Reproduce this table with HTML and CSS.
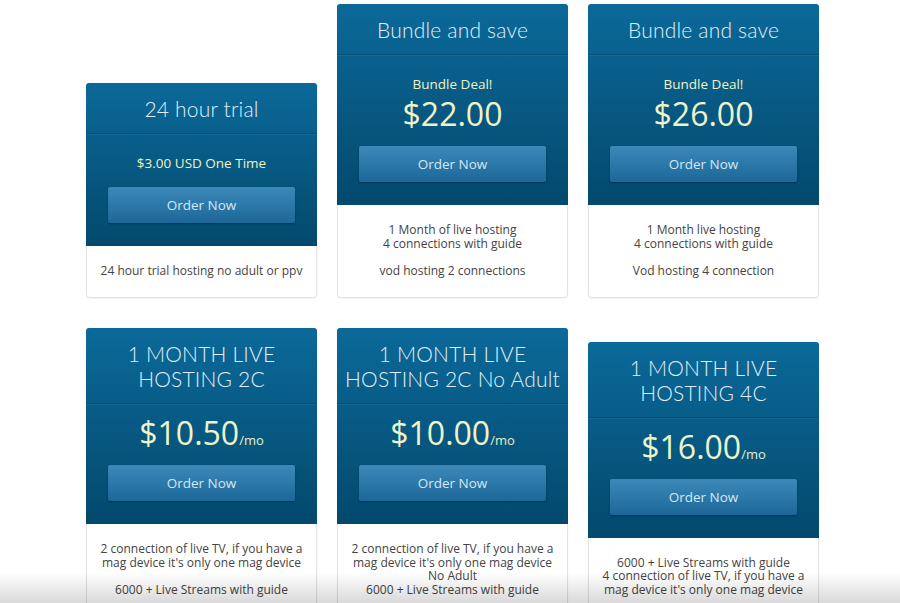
FILE: index.html
```
<!DOCTYPE html>
<html lang="en">
<head>
<meta charset="utf-8">
<title>Hosting plans</title>
<link rel="stylesheet" href="styles.css">
</head>
<body>
<main class="plans">
  <section class="row">
    <article class="card">
      <header class="head">
        <h2 class="title">24 hour trial</h2>
        <div class="pricing">
          <div class="note">$3.00 USD One Time</div>
          <a class="btn" href="#">Order Now</a>
        </div>
      </header>
      <div class="features">
        <p>24 hour trial hosting no adult or ppv</p>
      </div>
    </article>
    <article class="card">
      <header class="head">
        <h2 class="title">Bundle and save</h2>
        <div class="pricing">
          <div class="note">Bundle Deal!</div>
          <div class="price">$22.00</div>
          <a class="btn" href="#">Order Now</a>
        </div>
      </header>
      <div class="features">
        <p>1 Month of live hosting<br>4 connections with guide</p>
        <p>vod hosting 2 connections</p>
      </div>
    </article>
    <article class="card">
      <header class="head">
        <h2 class="title">Bundle and save</h2>
        <div class="pricing">
          <div class="note">Bundle Deal!</div>
          <div class="price">$26.00</div>
          <a class="btn" href="#">Order Now</a>
        </div>
      </header>
      <div class="features">
        <p>1 Month live hosting<br>4 connections with guide</p>
        <p>Vod hosting 4 connection</p>
      </div>
    </article>
  </section>

  <section class="row">
    <article class="card">
      <header class="head">
        <h2 class="title">1 MONTH LIVE<br>HOSTING 2C</h2>
        <div class="pricing">
          <div class="price">$10.50<span class="per">/mo</span></div>
          <a class="btn" href="#">Order Now</a>
        </div>
      </header>
      <div class="features">
        <p>2 connection of live TV, if you have a<br>mag device it's only one mag device</p>
        <p>6000 + Live Streams with guide</p>
      </div>
    </article>
    <article class="card">
      <header class="head">
        <h2 class="title">1 MONTH LIVE<br>HOSTING 2C No Adult</h2>
        <div class="pricing">
          <div class="price">$10.00<span class="per">/mo</span></div>
          <a class="btn" href="#">Order Now</a>
        </div>
      </header>
      <div class="features">
        <p>2 connection of live TV, if you have a<br>mag device it's only one mag device<br>No Adult<br>6000 + Live Streams with guide</p>
      </div>
    </article>
    <article class="card">
      <header class="head">
        <h2 class="title">1 MONTH LIVE<br>HOSTING 4C</h2>
        <div class="pricing">
          <div class="price">$16.00<span class="per">/mo</span></div>
          <a class="btn" href="#">Order Now</a>
        </div>
      </header>
      <div class="features">
        <p>6000 + Live Streams with guide<br>4 connection of live TV, if you have a<br>mag device it's only one mag device</p>
      </div>
    </article>
  </section>
</main>
<div class="fade"></div>
</body>
</html>
```

FILE: styles.css
```
html, body {
  margin: 0;
  padding: 0;
  background: #ffffff;
}

body {
  font-family: "Open Sans", "DejaVu Sans", sans-serif;
  color: #444444;
}

.plans {
  padding: 4px 0 0 86px;
  display: flex;
  flex-direction: column;
  gap: 30px;
}

.row {
  display: flex;
  align-items: flex-end;
  gap: 20px;
}

.card {
  position: relative;
  width: 231px;
  border: 1px solid #e3e3e3;
  border-radius: 4px;
  background: #ffffff;
  box-shadow: 0 1px 2px rgba(0, 0, 0, 0.06);
  box-sizing: border-box;
}

.card::after {
  content: "";
  position: absolute;
  left: 11%;
  right: 11%;
  bottom: 1px;
  height: 16px;
  border-radius: 50%;
  box-shadow: 0 5px 5px rgba(0, 0, 0, 0.45);
  z-index: -1;
}

.head {
  background: linear-gradient(#0b6999, #03496d);
  border-radius: 3px 3px 0 0;
  margin: -1px -1px 0;
  text-align: center;
}

.title {
  margin: 0;
  padding: 13px 4px 12px;
  font-family: "Lato", "Open Sans", sans-serif;
  font-weight: 300;
  font-size: 21px;
  letter-spacing: 0.2px;
  line-height: 25px;
  color: #e0eff9;
  border-bottom: 1px solid rgba(0, 0, 0, 0.14);
  box-shadow: 0 1px 0 rgba(255, 255, 255, 0.05);
}

.pricing {
  padding: 9px 22px 23px;
}

.note {
  margin-top: 10px;
  font-size: 13.5px;
  line-height: 20px;
  color: #eef3c6;
}

.price {
  font-size: 32px;
  line-height: 40px;
  color: #eef4c8;
}

.per {
  font-size: 13px;
  line-height: 1;
  color: #e6eec4;
}

.btn {
  display: block;
  margin-top: 12px;
  height: 36px;
  line-height: 36px;
  border-radius: 2px;
  background: linear-gradient(#3c89b9, #1c6797);
  box-shadow: 0 1px 2px rgba(0, 0, 0, 0.35);
  color: #d3e8f6;
  font-size: 13.5px;
  text-decoration: none;
}

.note + .btn {
  margin-top: 14px;
}

.features {
  padding: 18px 6px 20px;
  text-align: center;
  font-size: 12px;
  line-height: 13.5px;
  color: #444444;
}

.features p {
  margin: 0;
}

.features p + p {
  margin-top: 13.5px;
}

.fade {
  position: fixed;
  left: 0;
  right: 0;
  bottom: 0;
  height: 30px;
  background: linear-gradient(rgba(0, 0, 0, 0), rgba(0, 0, 0, 0.15));
  pointer-events: none;
}
```
